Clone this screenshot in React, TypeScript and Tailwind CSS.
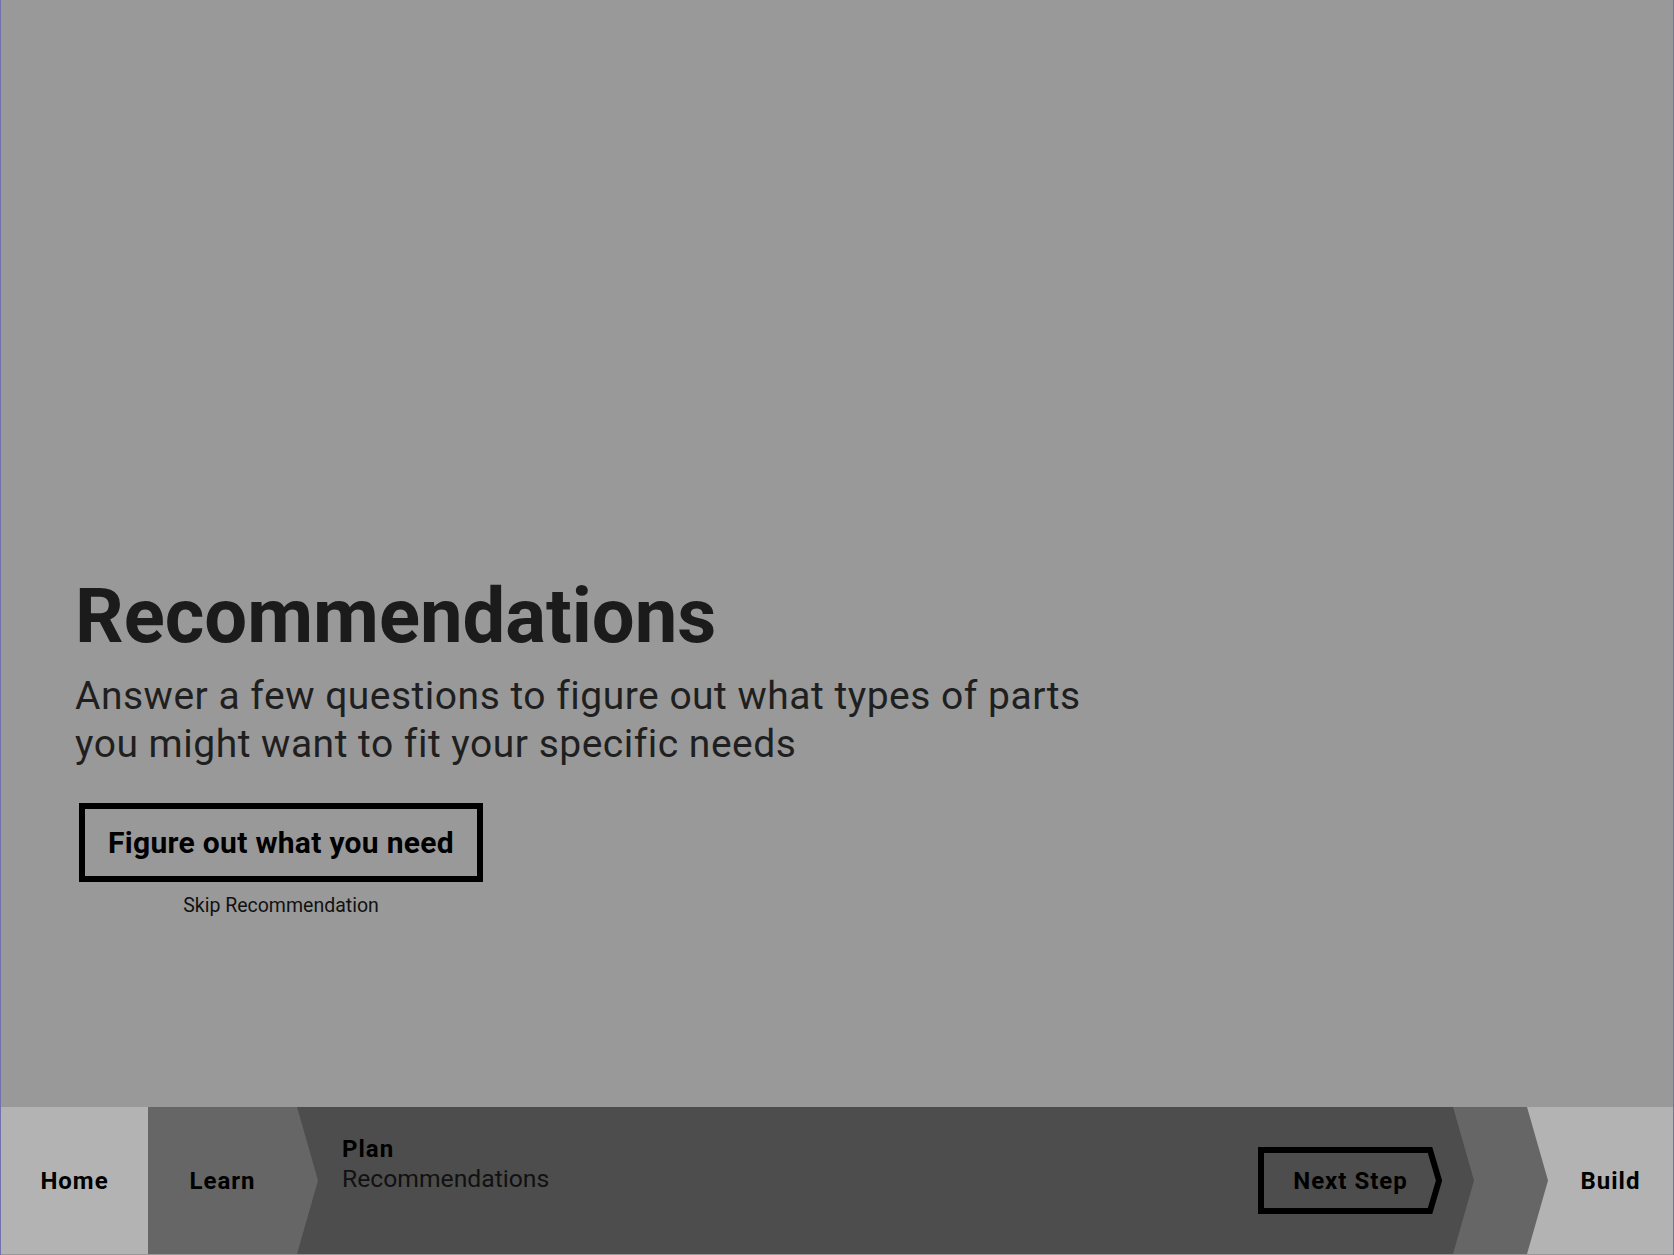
import React from "react";

const FONT = "font-['Roboto','Liberation_Sans',sans-serif]";

function Arrow({ fill }: { fill: string }): React.JSX.Element {
  return (
    <svg
      className="absolute top-0 left-full z-10 h-full w-[21px]"
      viewBox="0 0 21 147"
      preserveAspectRatio="none"
    >
      <polygon points="0,0 21,73.5 0,147" fill={fill} />
    </svg>
  );
}

function NextStepButton(): React.JSX.Element {
  return (
    <button type="button" className="relative w-[185px] h-[67px] flex items-center justify-center">
      <svg className="absolute inset-0" width="185" height="67" viewBox="0 0 185 67">
        <path
          d="M3 3 H172 L181 33.5 L172 64 H3 Z"
          fill="none"
          stroke="#000"
          strokeWidth="6"
          strokeLinejoin="miter"
        />
      </svg>
      <span className="relative text-[24px] tracking-[1px] font-bold text-black leading-none">Next Step</span>
    </button>
  );
}

export default function App(): React.JSX.Element {
  return (
    <div className={`${FONT} w-full h-[1255px] bg-[#999999] border-x border-[#7272b0] flex flex-col`}>
      <main className="h-[1107px] pl-[74px] pt-[578px] flex flex-col items-start">
        <h1 className="text-[76px] leading-none font-bold text-[#1b1b1b]">Recommendations</h1>
        <p className="mt-[18px] text-[39px] tracking-[0.5px] leading-[48px] text-[#1f1f1f]">
          Answer a few questions to figure out what types of parts
          <br />
          you might want to fit your specific needs
        </p>
        <div className="mt-[35px] ml-[4px] flex flex-col items-center">
          <button
            type="button"
            className="w-[404px] h-[79px] border-[6px] border-black text-[30px] tracking-[0.3px] font-bold text-black"
          >
            Figure out what you need
          </button>
          <span className="mt-[10px] text-[19.5px] leading-[28px] text-[#111]">Skip Recommendation</span>
        </div>
      </main>

      <nav className="h-[147px] flex text-black text-[24px] tracking-[1px]">
        <div className="w-[147px] bg-[#b3b3b3] flex items-center justify-center">
          <span className="font-bold">Home</span>
        </div>
        <div className="relative w-[149px] bg-[#666666] flex items-center justify-center">
          <span className="font-bold">Learn</span>
          <Arrow fill="#666666" />
        </div>
        <div className="relative flex-1 bg-[#4d4d4d] pl-[45px] pr-[10px] flex items-center justify-between">
          <div className="pb-[34px] flex flex-col leading-[30px]">
            <span className="font-bold">Plan</span>
            <span className="text-[24.7px] tracking-normal text-[#111]">Recommendations</span>
          </div>
          <NextStepButton />
          <Arrow fill="#4d4d4d" />
        </div>
        <div className="relative w-[74px] bg-[#666666]">
          <Arrow fill="#666666" />
        </div>
        <div className="w-[146px] bg-[#b3b3b3] pl-[21px] flex items-center justify-center">
          <span className="font-bold">Build</span>
        </div>
      </nav>
    </div>
  );
}
